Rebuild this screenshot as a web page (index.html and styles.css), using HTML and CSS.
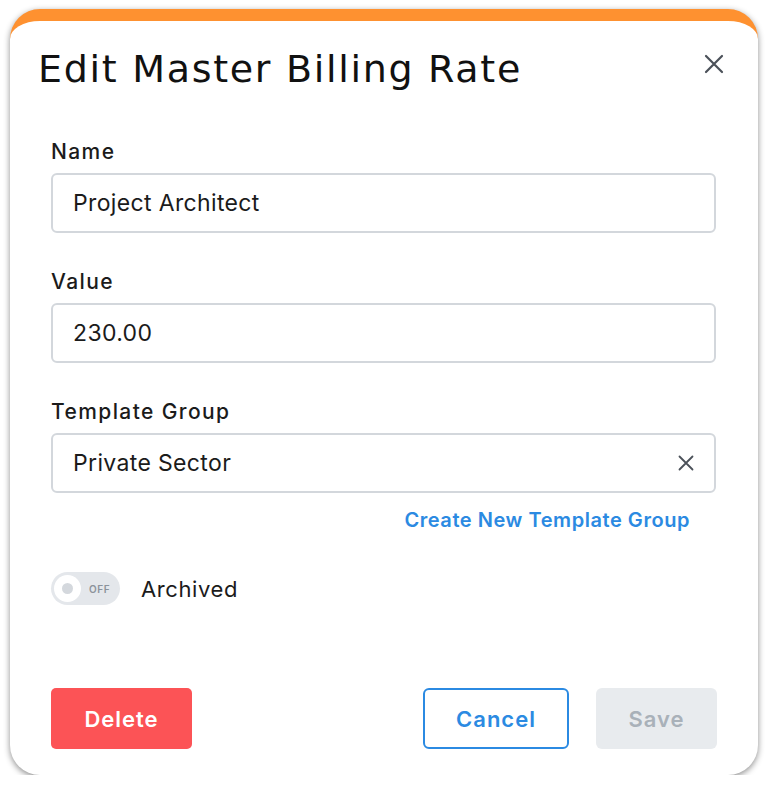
FILE: index.html
```html
<!DOCTYPE html>
<html lang="en">
<head>
<meta charset="utf-8">
<title>Edit Master Billing Rate</title>
<link rel="stylesheet" href="styles.css">
</head>
<body>
<div class="modal">
  <div class="modal-header">
    <h1 class="modal-title">Edit Master Billing Rate</h1>
    <button class="close-btn" aria-label="Close">
      <svg width="20" height="20" viewBox="0 0 20 20"><path d="M2 2 L18 18 M18 2 L2 18" stroke="#4b5159" stroke-width="2.2" stroke-linecap="round" fill="none"/></svg>
    </button>
  </div>
  <div class="modal-body">
    <div class="field">
      <label class="field-label">Name</label>
      <div class="input">Project Architect</div>
    </div>
    <div class="field">
      <label class="field-label">Value</label>
      <div class="input">230.00</div>
    </div>
    <div class="field">
      <label class="field-label">Template Group</label>
      <div class="input select">
        <span>Private Sector</span>
        <svg class="clear-icon" width="16" height="16" viewBox="0 0 16 16"><path d="M1.5 1.5 L14.5 14.5 M14.5 1.5 L1.5 14.5" stroke="#4b5159" stroke-width="1.8" stroke-linecap="round" fill="none"/></svg>
      </div>
      <div class="link-row"><a class="link">Create New Template Group</a></div>
    </div>
    <div class="toggle-row">
      <div class="toggle">
        <span class="knob"><span class="knob-dot"></span></span>
        <span class="toggle-text">OFF</span>
      </div>
      <span class="toggle-label">Archived</span>
    </div>
  </div>
  <div class="modal-footer">
    <button class="btn btn-delete">Delete</button>
    <div class="footer-right">
      <button class="btn btn-cancel">Cancel</button>
      <button class="btn btn-save">Save</button>
    </div>
  </div>
</div>
</body>
</html>
```
FILE: styles.css
```css
* { box-sizing: border-box; }
html, body { margin: 0; padding: 0; background: #ffffff; }
body { font-family: Inter, "Liberation Sans", sans-serif; color: #1b1b1b; padding: 9px 0 0 10px; }

.modal {
  width: 748px;
  height: 766px;
  background: #ffffff;
  border-top: 12px solid #fe9130;
  border-radius: 30px;
  box-shadow: 0 2px 6px rgba(0,0,0,0.45);
  display: flex;
  flex-direction: column;
}

.modal-header {
  display: flex;
  justify-content: space-between;
  align-items: flex-start;
  padding: 24px 34px 0 28px;
}
.modal-title {
  margin: 0;
  font-family: "DejaVu Sans", Inter, sans-serif;
  font-weight: 400;
  font-size: 38px;
  line-height: 48px;
  letter-spacing: 1.7px;
  color: #111111;
}
.close-btn {
  margin-top: 9px;
  width: 20px;
  height: 20px;
  padding: 0;
  border: 0;
  background: none;
  display: block;
}
.close-btn svg { display: block; }

.modal-body {
  padding: 47px 42px 0 41px;
}
.field { margin-bottom: 37px; }
.field-label {
  display: block;
  font-size: 21px;
  line-height: 24px;
  font-weight: 500;
  letter-spacing: 1.4px;
  color: #1b1b1b;
  margin-bottom: 9px;
}
.input {
  height: 60px;
  border: 2px solid #d3d7dc;
  border-radius: 6px;
  padding: 0 20px;
  display: flex;
  align-items: center;
  font-size: 23px;
  letter-spacing: 0.35px;
  color: #1b1b1b;
}
.select { justify-content: space-between; padding-right: 20px; }
.clear-icon { display: block; }

.link-row {
  display: flex;
  justify-content: flex-end;
  padding-right: 26px;
  margin-top: 15px;
}
.link {
  font-size: 20px;
  line-height: 24px;
  font-weight: 600;
  color: #2b8ae2;
  letter-spacing: 0.55px;
}
.field:nth-child(3) { margin-bottom: 40px; }

.toggle-row {
  display: flex;
  align-items: center;
  gap: 21px;
}
.toggle {
  width: 69px;
  height: 33px;
  border-radius: 17px;
  background: #e4e7eb;
  display: flex;
  align-items: center;
  padding-left: 3px;
}
.knob {
  width: 27px;
  height: 27px;
  border-radius: 50%;
  background: #ffffff;
  display: flex;
  align-items: center;
  justify-content: center;
}
.knob-dot {
  width: 11px;
  height: 11px;
  border-radius: 50%;
  background: #d4d8dd;
}
.toggle-text {
  margin-left: 8px;
  font-size: 10px;
  font-weight: 600;
  color: #8c939b;
  letter-spacing: 0.6px;
}
.toggle-label {
  font-size: 22px;
  letter-spacing: 0.6px;
  color: #1b1b1b;
}

.modal-footer {
  margin-top: auto;
  padding: 0 41px 26px 41px;
  display: flex;
  justify-content: space-between;
  align-items: center;
}
.footer-right { display: flex; gap: 27px; }
.btn {
  height: 61px;
  border-radius: 6px;
  font-family: Inter, "Liberation Sans", sans-serif;
  font-size: 22px;
  font-weight: 600;
  letter-spacing: 1px;
  border: 0;
  padding: 0;
}
.btn-delete {
  width: 141px;
  background: #fc5356;
  color: #ffffff;
  border-radius: 5px;
}
.btn-cancel {
  width: 146px;
  background: #ffffff;
  border: 2px solid #2b8ae2;
  color: #2b8ae2;
}
.btn-save {
  width: 121px;
  background: #e8ebee;
  color: #a9b1b9;
}
```
